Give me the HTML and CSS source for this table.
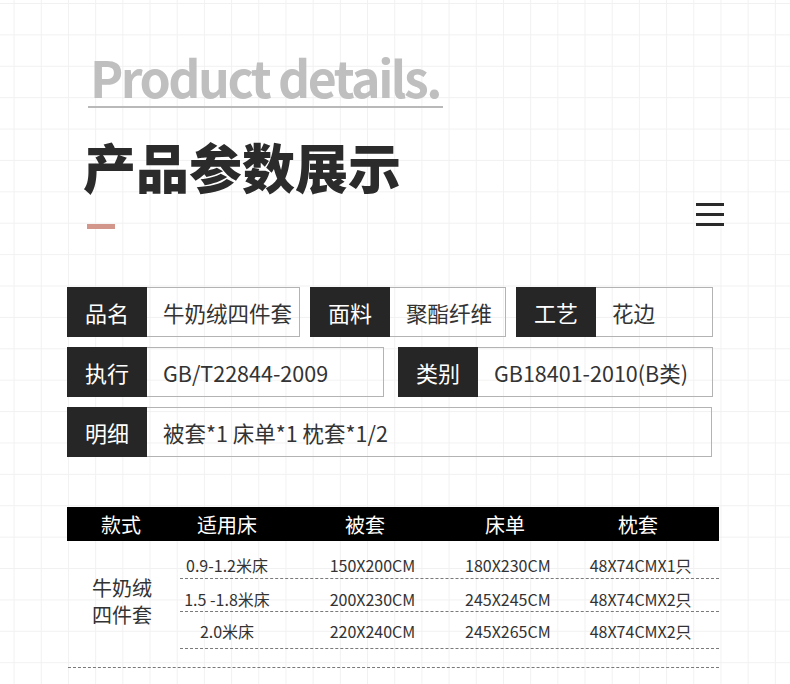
FILE: index.html
```html
<!DOCTYPE html>
<html lang="zh-CN">
<head>
<meta charset="utf-8">
<title>产品参数展示</title>
<link rel="stylesheet" href="styles.css">
</head>
<body>
<div class="page">
  <header class="hero">
    <div class="en-title">Product details.</div>
    <h1 class="cn-title">产品参数展示</h1>
    <div class="accent-row">
      <span class="accent"></span>
      <span class="menu"><i></i><i></i><i></i></span>
    </div>
  </header>

  <section class="specs">
    <div class="spec-row">
      <div class="spec w233"><span class="lbl">品名</span><span class="val">牛奶绒四件套</span></div>
      <div class="spec w196"><span class="lbl">面料</span><span class="val">聚酯纤维</span></div>
      <div class="spec w197"><span class="lbl">工艺</span><span class="val">花边</span></div>
    </div>
    <div class="spec-row">
      <div class="spec w317"><span class="lbl">执行</span><span class="val">GB/T22844-2009</span></div>
      <div class="spec w315"><span class="lbl">类别</span><span class="val">GB18401-2010(B类)</span></div>
    </div>
    <div class="spec-row">
      <div class="spec wfull"><span class="lbl">明细</span><span class="val">被套*1 床单*1 枕套*1/2</span></div>
    </div>
  </section>

  <section class="size-table">
    <div class="thead">
      <span class="c1">款式</span>
      <span class="c2">适用床</span>
      <span class="c3">被套</span>
      <span class="c4">床单</span>
      <span class="c5">枕套</span>
    </div>
    <div class="tbody">
      <div class="style-cell">牛奶绒<br>四件套</div>
      <div class="rows">
        <div class="trow r1"><span class="c2">0.9-1.2米床</span><span class="c3">150X200CM</span><span class="c4">180X230CM</span><span class="c5">48X74CMX1只</span></div>
        <div class="trow r2"><span class="c2">1.5 -1.8米床</span><span class="c3">200X230CM</span><span class="c4">245X245CM</span><span class="c5">48X74CMX2只</span></div>
        <div class="trow r3"><span class="c2">2.0米床</span><span class="c3">220X240CM</span><span class="c4">245X265CM</span><span class="c5">48X74CMX2只</span></div>
      </div>
    </div>
    <div class="bottom-line"></div>
  </section>
</div>
</body>
</html>
```

FILE: styles.css
```css
html, body {
  margin: 0;
  padding: 0;
}
body {
  width: 790px;
  height: 684px;
  overflow: hidden;
  background-color: #ffffff;
  background-image:
    linear-gradient(to right, #f1f1f1 1px, transparent 1px),
    linear-gradient(to bottom, #f1f1f1 1px, transparent 1px);
  background-size: 27.2px 31.4px;
  background-position: 13.6px 3px;
  font-family: "Noto Sans CJK SC", "Noto Sans", sans-serif;
  color: #333;
}
.page {
  padding-top: 46px;
}

/* hero */
.hero {
  display: flex;
  flex-direction: column;
  align-items: flex-start;
}
.en-title {
  margin-left: 88px;
  padding: 0 3px 0 2px;
  font-family: "Noto Sans CJK SC", sans-serif;
  font-weight: 700;
  font-size: 50px;
  line-height: 60px;
  color: #bfbfbf;
  letter-spacing: -2.5px;
  border-bottom: 2px solid #b9b9b9;
}
.cn-title {
  margin: 28px 0 0 83px;
  font-family: "Noto Sans CJK SC", sans-serif;
  font-weight: 900;
  font-size: 53px;
  line-height: 60px;
  color: #2b2b2b;
}
.accent-row {
  align-self: stretch;
  display: flex;
  justify-content: space-between;
  align-items: flex-end;
  margin: 7px 66px 0 87px;
}
.accent {
  width: 28px;
  height: 5px;
  background: #d2968b;
}
.menu {
  display: flex;
  flex-direction: column;
  gap: 7px;
  width: 28px;
  margin-bottom: 3px;
}
.menu i {
  display: block;
  height: 3px;
  background: #2a2a2a;
}

/* specs */
.specs {
  margin: 58px 0 0 67px;
  width: 646px;
  display: flex;
  flex-direction: column;
  gap: 10px;
}
.spec-row {
  display: flex;
  justify-content: space-between;
}
.spec {
  display: flex;
  height: 50px;
}
.w233 { width: 233px; }
.w196 { width: 196px; }
.w197 { width: 197px; }
.w317 { width: 317px; }
.w315 { width: 315px; }
.wfull { width: 645px; }
.lbl {
  flex: 0 0 80px;
  background: #262626;
  color: #fff;
  font-size: 22px;
  display: flex;
  align-items: center;
  justify-content: center;
}
.val {
  flex: 1;
  box-sizing: border-box;
  border: 1px solid #b3b3b3;
  border-left: none;
  padding-left: 16px;
  display: flex;
  align-items: center;
  font-size: 21.5px;
  color: #333;
  white-space: nowrap;
}

/* table */
.size-table {
  margin: 50px 0 0 67px;
  width: 652px;
}
.thead {
  display: flex;
  height: 34px;
  align-items: center;
  background: #000;
  color: #fff;
  font-size: 20px;
}
.c1 { flex: 0 0 108px; text-align: center; }
.c2 { flex: 0 0 104px; text-align: center; }
.c3 { flex: 0 0 182px; text-align: center; }
.c4 { flex: 0 0 88px; text-align: center; }
.c5 { flex: 0 0 154px; padding-left: 16px; text-align: center; }
.thead .c3 { flex-basis: 172px; padding-right: 10px; }
.thead .c5 { padding-left: 12px; }

.tbody {
  display: flex;
}
.style-cell {
  flex: 0 0 110px;
  text-align: center;
  font-size: 20px;
  line-height: 27px;
  color: #333;
  padding-top: 33px;
}
.rows {
  flex: 1;
  margin-left: 3px;
}
.trow {
  display: flex;
  box-sizing: border-box;
  border-bottom: 1px dashed #7a7a7a;
  font-size: 16px;
  line-height: 20px;
  color: #333;
}
.trow .c2 { flex-basis: 94px; }
.trow .c3 { flex-basis: 177px; padding-left: 10px; }
.trow .c4 { flex-basis: 84px; padding-left: 4px; }
.trow .c5 { padding-left: 13px; }
.r1 { height: 38px; padding-top: 14px; }
.r2 { height: 33px; padding-top: 10px; }
.r3 { height: 37px; padding-top: 9px; }
.bottom-line {
  margin-top: 18px;
  border-bottom: 1px dashed #7a7a7a;
  margin-left: 1px;
}
```
